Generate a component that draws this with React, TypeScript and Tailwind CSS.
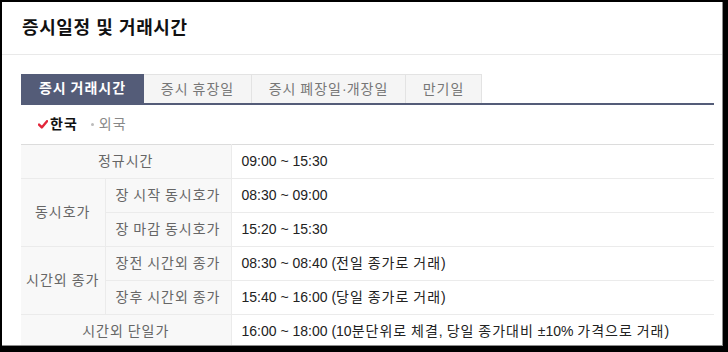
import React from 'react'

const font = { fontFamily: '"Liberation Sans", "Noto Sans CJK KR", sans-serif' }

const tabs = [
  { label: '증시 거래시간', width: 'w-[123px]', active: true },
  { label: '증시 휴장일', width: 'w-[108px]' },
  { label: '증시 폐장일·개장일', width: 'w-[154px]' },
  { label: '만기일', width: 'w-[76px]' },
]

// hangul runs get a little extra spacing so they sit as wide as the original font
function K({ text }: { text: string }) {
  const parts = text.split(/([\uAC00-\uD7A3]+)/)
  return (
    <span>
      {parts.map((p, i) =>
        i % 2 === 1 ? (
          <span key={i} className="tracking-[1px]">{p}</span>
        ) : (
          <React.Fragment key={i}>{p}</React.Fragment>
        )
      )}
    </span>
  )
}

function Check() {
  return (
    <svg width="10" height="9" viewBox="0 0 10 9" className="mr-[2px]">
      <path d="M1 4.6 L3.8 7.4 L9 1.2" fill="none" stroke="#e3263a" strokeWidth="2.4" strokeLinecap="round" strokeLinejoin="round" />
    </svg>
  )
}

export default function App() {
  const th = 'bg-[#f8f8f8] text-[#666] font-normal text-center border-r border-b border-[#ebebeb]'
  const td = 'text-[#222] pl-[10px] text-left border-b border-[#ebebeb]'

  const rows: { a?: string; b?: string; span?: number; v: string }[] = [
    { a: '정규시간', v: '09:00 ~ 15:30' },
    { a: '동시호가', span: 2, b: '장 시작 동시호가', v: '08:30 ~ 09:00' },
    { b: '장 마감 동시호가', v: '15:20 ~ 15:30' },
    { a: '시간외 종가', span: 2, b: '장전 시간외 종가', v: '08:30 ~ 08:40 (전일 종가로 거래)' },
    { b: '장후 시간외 종가', v: '15:40 ~ 16:00 (당일 종가로 거래)' },
    { a: '시간외 단일가', v: '16:00 ~ 18:00 (10분단위로 체결, 당일 종가대비 ±10% 가격으로 거래)' },
  ]

  return (
    <div className="w-[728px] h-[352px] bg-black pt-[2px] pl-[2px]" style={font}>
      <div className="w-[721px] h-[344px] bg-white border-r border-b border-[#8c8c8c] overflow-hidden">
        <div className="h-[53px] flex items-center pl-[20px] border-b border-[#e9e9e9]">
          <h1 className="text-[18px] font-bold text-[#111] tracking-[0.6px]">증시일정 및 거래시간</h1>
        </div>

        <div className="pl-[19px] pr-[8px] pt-[19px]">
          <div className="flex border-b-2 border-[#545c78]">
            {tabs.map((t) =>
              t.active ? (
                <div key={t.label} className={`${t.width} h-[29px] flex items-center justify-center bg-[#545c78] text-white font-bold text-[14px]`}>
                  <K text={t.label} />
                </div>
              ) : (
                <div key={t.label} className={`${t.width} h-[29px] flex items-center justify-center bg-[#f5f5f5] text-[#777] text-[14px] border-t border-r border-[#e3e3e3]`}>
                  <K text={t.label} />
                </div>
              )
            )}
          </div>

          <div className="h-[39px] flex items-center pl-[17px] text-[14px]">
            <Check />
            <span className="font-bold text-[#111]"><K text="한국" /></span>
            <span className="ml-[13px] w-[3px] h-[3px] rounded-full bg-[#bbb]" />
            <span className="ml-[5px] text-[#888]"><K text="외국" /></span>
          </div>

          <table className="w-full border-collapse border-t border-[#dcdcdc] text-[14px]">
            <colgroup>
              <col className="w-[84px]" />
              <col className="w-[126px]" />
              <col />
            </colgroup>
            <tbody>
              {rows.map((r, i) => (
                <tr key={i} className="h-[34px]">
                  {r.a && !r.b && (
                    <th colSpan={2} className={th}><K text={r.a} /></th>
                  )}
                  {r.a && r.b && (
                    <th rowSpan={r.span} className={th}><K text={r.a} /></th>
                  )}
                  {r.b && <th className={th}><K text={r.b} /></th>}
                  <td className={td}><K text={r.v} /></td>
                </tr>
              ))}
            </tbody>
          </table>
        </div>
      </div>
    </div>
  )
}
